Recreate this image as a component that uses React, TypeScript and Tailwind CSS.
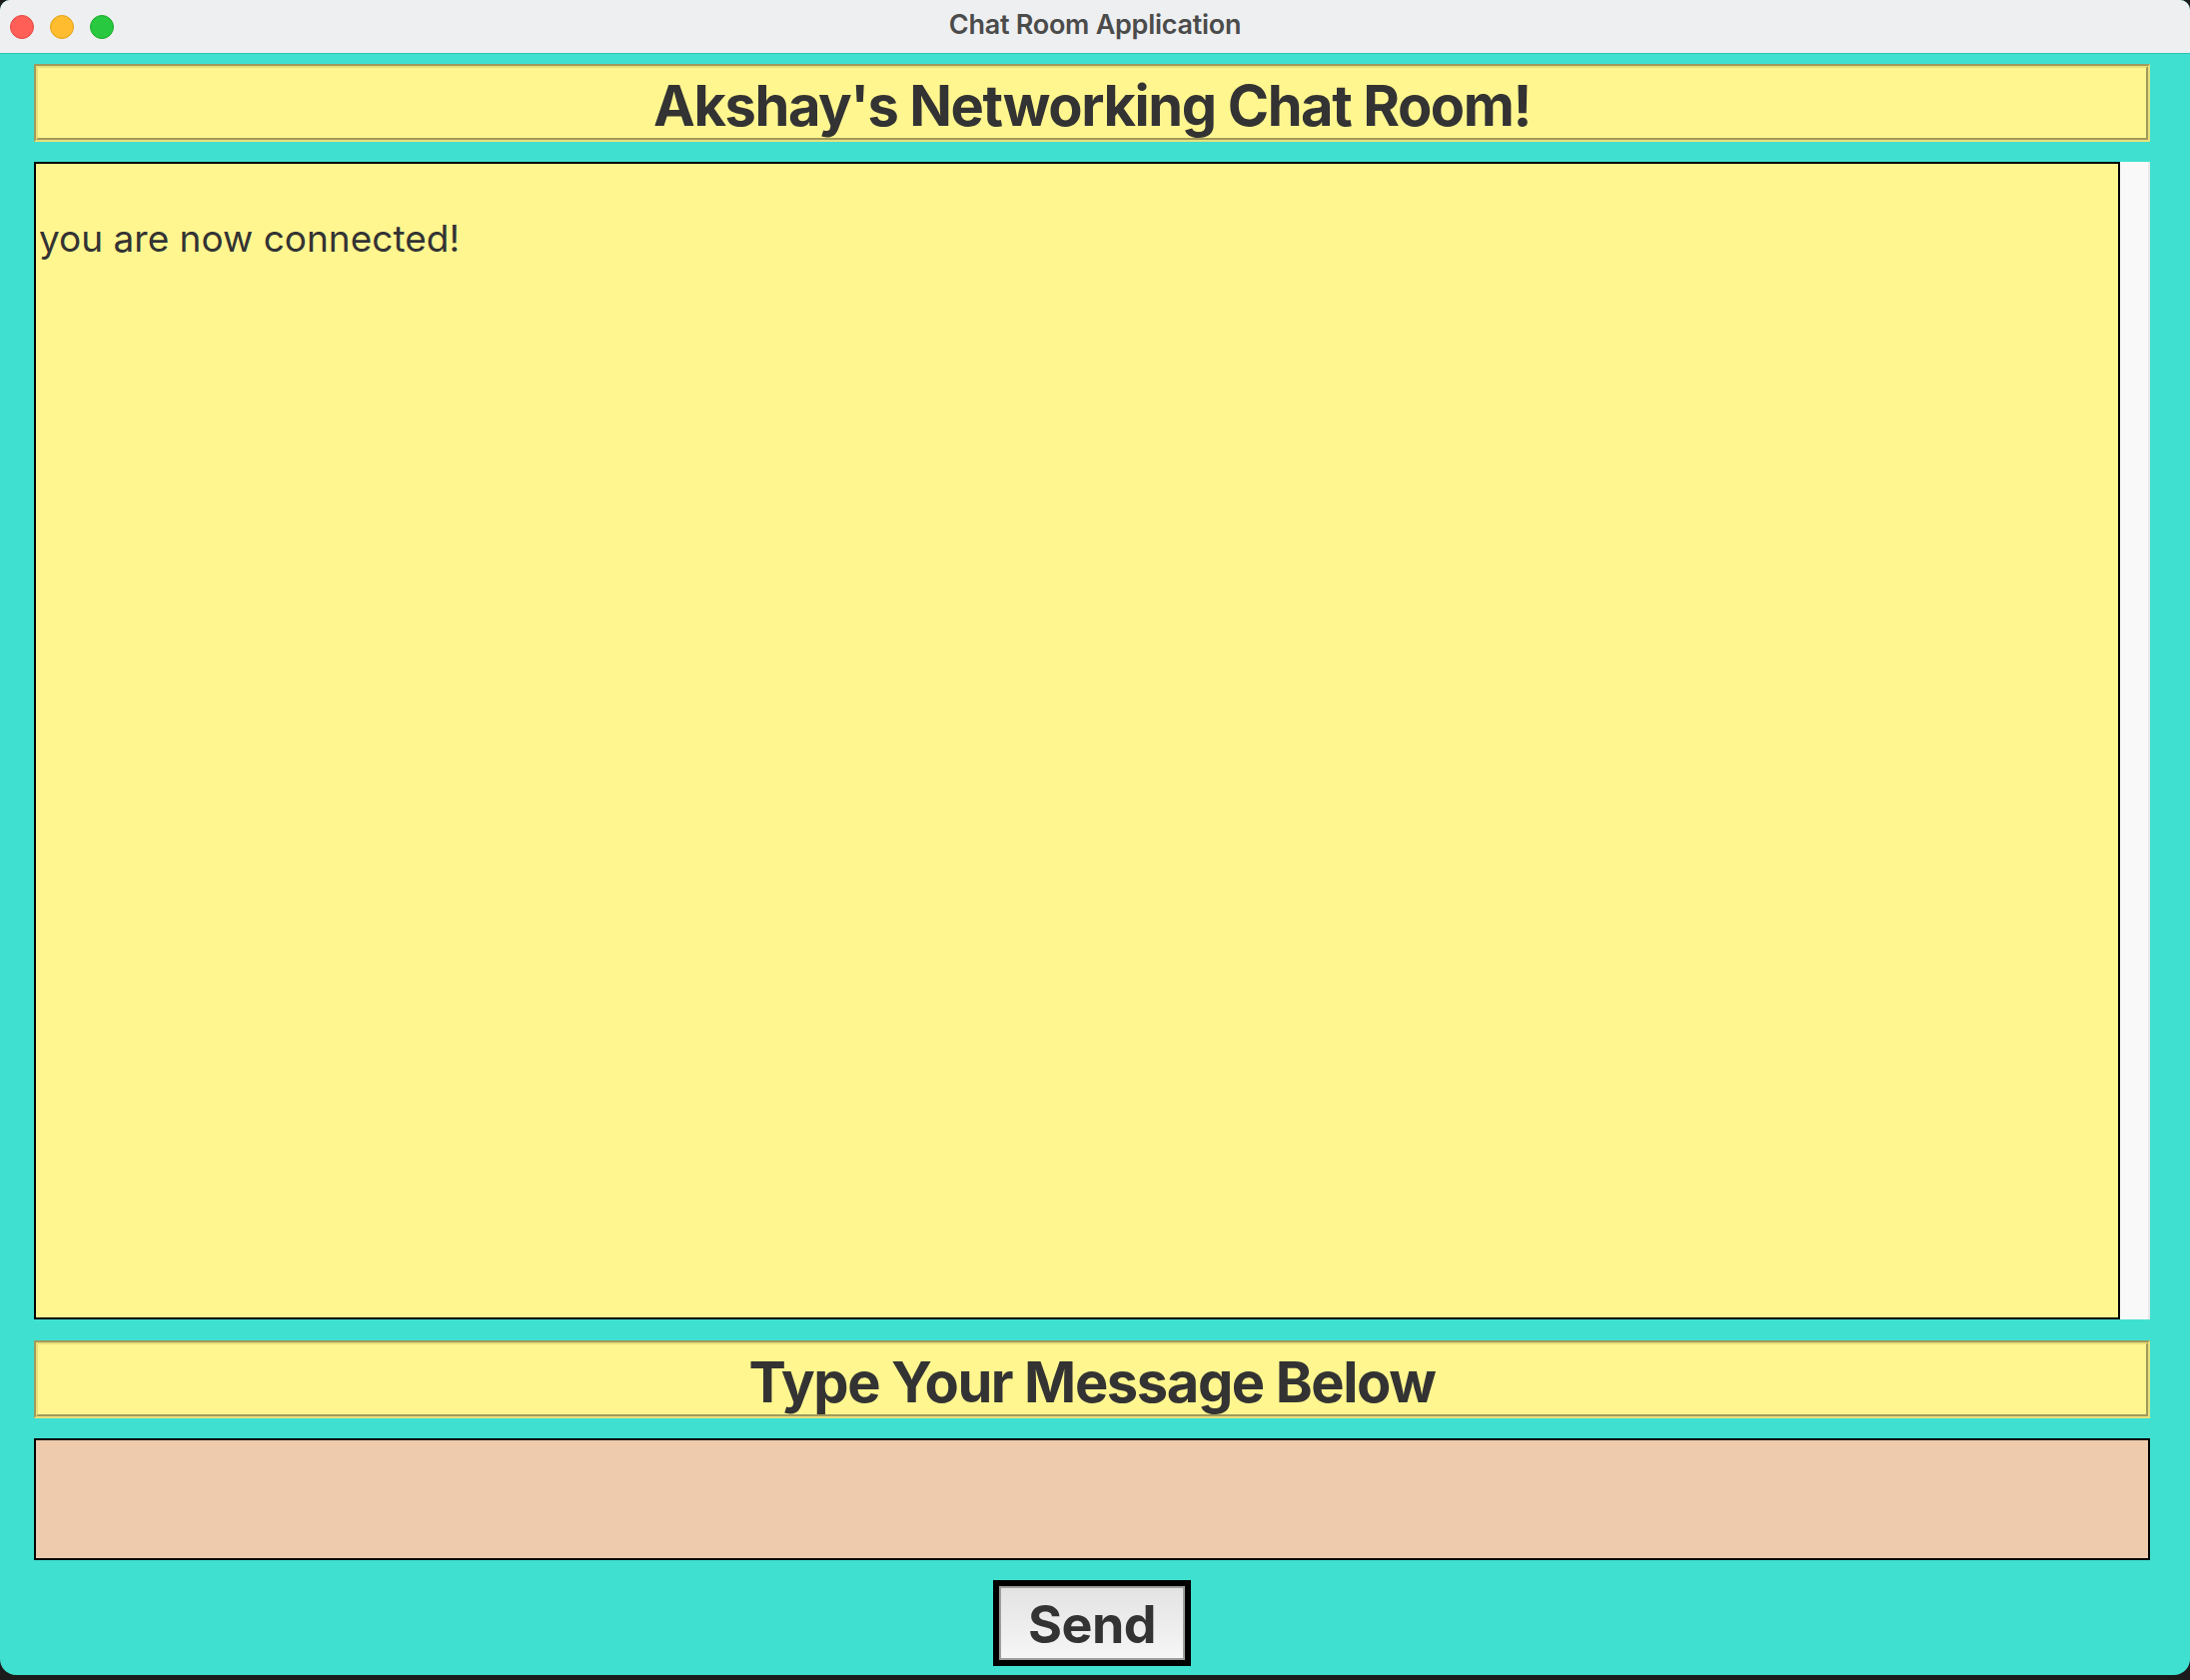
import { useState } from 'react';

const EtchedBox = ({ label }: { label: string }) => (
  <div className="h-[78px] border-2 border-t-[#a09a5b] border-l-[#a09a5b] border-b-[#ebe07a] border-r-[#ebe07a] bg-[#fff68f]">
    <div className="h-full border-2 border-t-[#ebe07a] border-l-[#ebe07a] border-b-[#a09a5b] border-r-[#a09a5b] flex items-center justify-center">
      <h1 className="font-['Inter',sans-serif] font-bold text-[56px] leading-none tracking-[-0.025em] text-[#333333] pt-[6px]">
        {label}
      </h1>
    </div>
  </div>
);

const App = () => {
  const [message, setMessage] = useState('');
  const [log] = useState<string[]>(['', 'you are now connected!']);

  return (
    <div className="w-[2192px] h-[1682px] bg-[#1b1b1b]">
      <div className="h-[1677px] flex flex-col overflow-hidden rounded-t-[10px] rounded-b-[16px] bg-[#40e0d0]">
        {/* Title bar */}
        <div className="h-[54px] shrink-0 grid grid-cols-[1fr_auto_1fr] items-center bg-[#eeeff1] border-b border-[#2cc2b2]">
          <div className="flex items-center gap-[16px] pl-[10px]">
            <span className="w-[24px] h-[24px] rounded-full bg-[#ff5f57] border border-[#e2463f]" />
            <span className="w-[24px] h-[24px] rounded-full bg-[#febc2e] border border-[#e1a116]" />
            <span className="w-[24px] h-[24px] rounded-full bg-[#28c840] border border-[#1aab29]" />
          </div>
          <div className="font-['Inter',sans-serif] font-semibold text-[27px] text-[#4b4b4b] tracking-[-0.01em] pb-[3px]">
            Chat Room Application
          </div>
          <div />
        </div>

        {/* Content */}
        <main className="flex-1 flex flex-col pl-[34px] pr-[40px] pt-[10px] pb-[9px]">
          <EtchedBox label="Akshay's Networking Chat Room!" />

          <div className="mt-[20px] h-[1159px] flex">
            <div className="flex-1 border-2 border-black bg-[#fff68f] pl-[3px] font-['Inter',sans-serif] text-[37px] leading-[45px] text-[#333333] pt-[7px] whitespace-pre">
              {log.map((line, i) => (
                <div key={i} className="h-[45px]">{line}</div>
              ))}
            </div>
            <div className="w-[30px] bg-[#f9f9f9] border-r-2 border-[#e9e9e9]" />
          </div>

          <div className="mt-[21px]">
            <EtchedBox label="Type Your Message Below" />
          </div>

          <input
            value={message}
            onChange={(e) => setMessage(e.target.value)}
            className="mt-[20px] h-[122px] border-2 border-black bg-[#eecbad] outline-none px-[4px] font-['Inter',sans-serif] text-[37px] text-[#333333]"
          />

          <button
            onClick={() => setMessage('')}
            className="mt-[20px] self-center w-[198px] h-[86px] border-[6px] border-black"
          >
            <div className="h-full border-2 border-[#9e9e9e] bg-gradient-to-b from-[#e3e3e3] to-[#f6f6f6] flex items-center justify-center">
              <span className="font-['Inter',sans-serif] font-bold text-[52px] leading-none tracking-[-0.01em] text-[#333333] pt-[4px]">
                Send
              </span>
            </div>
          </button>
        </main>
      </div>
    </div>
  );
};

export default App;
